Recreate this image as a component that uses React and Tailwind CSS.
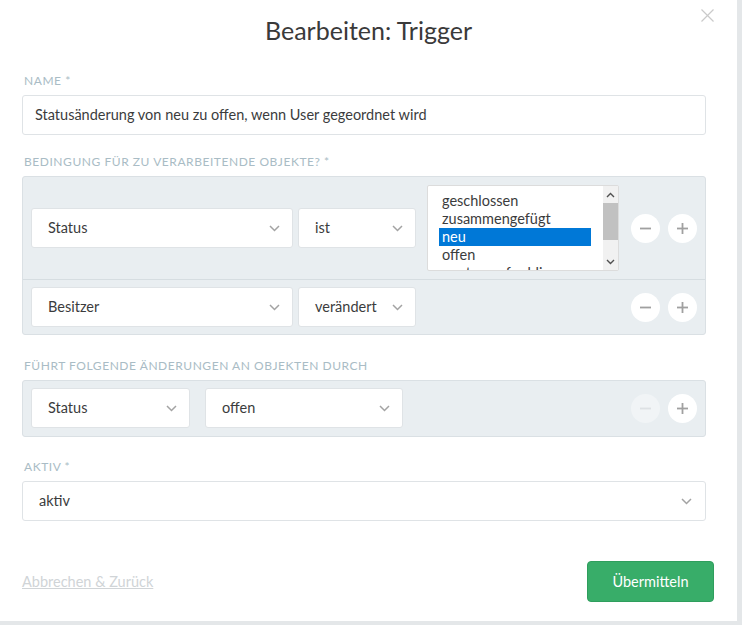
import React from 'react';

function Chevron({ className = '' }) {
  return (
    <svg width="11" height="7" viewBox="0 0 11 7" className={className}>
      <polyline points="1,1 5.5,5.5 10,1" fill="none" stroke="#a3a3a3" strokeWidth="1.5" />
    </svg>
  );
}

function Label({ children, className = '' }) {
  return (
    <div className={`h-[16px] leading-[16px] mb-[6px] pl-[2px] text-[12px] uppercase tracking-[0.55px] text-[#a9bcc5] ${className}`}>
      {children}
    </div>
  );
}

function Select({ children, className = '' }) {
  return (
    <div className={`h-[40px] shrink-0 bg-white border border-[#dfe3e6] rounded-[3px] flex items-center justify-between pl-[16px] pr-[12px] text-[14.5px] ${className}`}>
      <span>{children}</span>
      <Chevron />
    </div>
  );
}

function RoundButton({ type, disabled }) {
  return (
    <div
      className={`w-[29px] h-[29px] rounded-full flex items-center justify-center ${
        disabled ? 'bg-[#f1f4f6]' : 'bg-white'
      }`}
    >
      <svg width="11" height="11" viewBox="0 0 11 11">
        <line x1="0" y1="5.5" x2="11" y2="5.5" stroke={disabled ? '#dde1e4' : '#a0a0a0'} strokeWidth="1.8" />
        {type === 'plus' && <line x1="5.5" y1="0" x2="5.5" y2="11" stroke="#a0a0a0" strokeWidth="1.8" />}
      </svg>
    </div>
  );
}

function Listbox() {
  const items = ['geschlossen', 'zusammengefügt', 'neu', 'offen', 'warten auf schliessen'];
  return (
    <div className="ml-[11px] w-[192px] h-[86px] shrink-0 bg-white border border-[#dcdcdc] rounded-[2px] flex overflow-hidden">
      <div className="flex-1 pt-[6px] pl-[11px] pr-[12px] text-[14.5px] leading-[18px]">
        {items.map((item) => (
          <div
            key={item}
            className={`pl-[3px] whitespace-nowrap ${item === 'neu' ? 'bg-[#0078d7] text-white' : ''}`}
          >
            {item}
          </div>
        ))}
      </div>
      <div className="w-[15px] bg-[#f1f1f1] flex flex-col items-center">
        <svg width="9" height="6" viewBox="0 0 9 6" className="mt-[6px]">
          <polyline points="1,5 4.5,1.5 8,5" fill="none" stroke="#505050" strokeWidth="1.4" />
        </svg>
        <div className="mt-[5px] w-[15px] h-[37px] bg-[#c1c1c1]" />
        <svg width="9" height="6" viewBox="0 0 9 6" className="mt-auto mb-[5px]">
          <polyline points="1,1 4.5,4.5 8,1" fill="none" stroke="#505050" strokeWidth="1.4" />
        </svg>
      </div>
    </div>
  );
}

export default function App() {
  return (
    <div className="w-[742px] h-[625px] bg-[#e4e7e9] overflow-hidden text-[#3b3c3d] [font-family:Lato,'Liberation_Sans',sans-serif]">
      <div className="relative w-[737px] h-[621px] bg-white">
        {/* close */}
        <div className="absolute left-[701px] top-[9px]">
          <svg width="13" height="13" viewBox="0 0 13 13">
            <line x1="0.5" y1="0.5" x2="12.5" y2="12.5" stroke="#cacaca" strokeWidth="1.3" />
            <line x1="12.5" y1="0.5" x2="0.5" y2="12.5" stroke="#cacaca" strokeWidth="1.3" />
          </svg>
        </div>

        <h1 className="h-[62px] flex items-center justify-center text-[25px] text-[#3a3a3a]">
          Bearbeiten: Trigger
        </h1>

        <div className="pl-[22px] pr-[31px]">
          <Label className="mt-[11px]">Name *</Label>
          <div className="h-[40px] border border-[#dfe3e6] rounded-[3px] flex items-center px-[12px] text-[14.5px]">
            Statusänderung von neu zu offen, wenn User gegeordnet wird
          </div>

          <Label className="mt-[19px]">Bedingung für zu verarbeitende Objekte? *</Label>
          <div className="bg-[#e9eef1] border border-[#dae0e4] rounded-[3px]">
            <div className="flex items-center px-[8px] py-[8px] border-b border-[#d6dde1]">
              <Select className="w-[262px]">Status</Select>
              <Select className="w-[118px] ml-[5px]">ist</Select>
              <Listbox />
              <div className="ml-auto flex gap-[8px]">
                <RoundButton type="minus" />
                <RoundButton type="plus" />
              </div>
            </div>
            <div className="flex items-center px-[8px] py-[7px]">
              <Select className="w-[262px]">Besitzer</Select>
              <Select className="w-[118px] ml-[5px]">verändert</Select>
              <div className="ml-auto flex gap-[8px]">
                <RoundButton type="minus" />
                <RoundButton type="plus" />
              </div>
            </div>
          </div>

          <Label className="mt-[23px]">Führt folgende Änderungen an Objekten durch</Label>
          <div className="bg-[#e9eef1] border border-[#dae0e4] rounded-[3px] flex items-center px-[8px] pt-[7px] pb-[8px]">
            <Select className="w-[159px]">Status</Select>
            <Select className="w-[198px] ml-[15px]">offen</Select>
            <div className="ml-auto flex gap-[8px]">
              <RoundButton type="minus" disabled />
              <RoundButton type="plus" />
            </div>
          </div>

          <Label className="mt-[22px]">Aktiv *</Label>
          <Select className="w-full pl-[16px] pr-[13px]">aktiv</Select>
        </div>

        <div className="mt-[40px] pl-[22px] pr-[23px] flex items-center justify-between">
          <a className="text-[14.5px] text-[#d0d4d7] underline">Abbrechen &amp; Zurück</a>
          <button className="w-[127px] h-[41px] rounded-[4px] bg-[#38ad69] border border-[#2f9e5d] text-white text-[14.5px]">
            Übermitteln
          </button>
        </div>
      </div>
    </div>
  );
}
